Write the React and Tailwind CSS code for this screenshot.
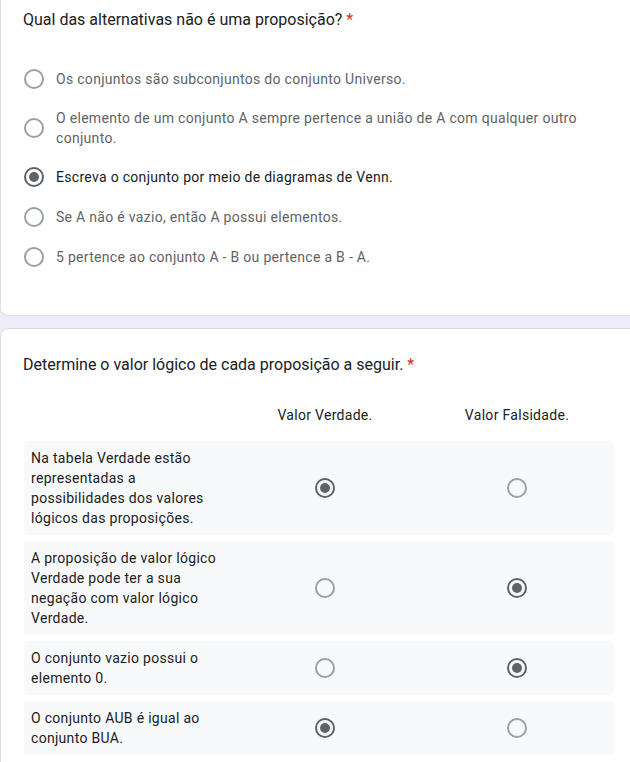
import React from "react";

const options = [
  { text: "Os conjuntos são subconjuntos do conjunto Universo.", checked: false },
  {
    text: "O elemento de um conjunto A sempre pertence a união de A com qualquer outro conjunto.",
    checked: false,
  },
  { text: "Escreva o conjunto por meio de diagramas de Venn.", checked: true },
  { text: "Se A não é vazio, então A possui elementos.", checked: false },
  { text: "5 pertence ao conjunto A - B ou pertence a B - A.", checked: false },
];

const rows = [
  {
    text: "Na tabela Verdade estão representadas a possibilidades dos valores lógicos das proposições.",
    value: "v",
  },
  {
    text: "A proposição de valor lógico Verdade pode ter a sua negação com valor lógico Verdade.",
    value: "f",
  },
  { text: "O conjunto vazio possui o elemento 0.", value: "f" },
  { text: "O conjunto AUB é igual ao conjunto BUA.", value: "v" },
];

const Radio = ({ checked }) => (
  <div
    className={`w-5 h-5 shrink-0 rounded-full border-2 flex items-center justify-center ${
      checked ? "border-[#5f6368]" : "border-[#9aa0a6]"
    }`}
  >
    {checked && <div className="w-[10px] h-[10px] rounded-full bg-[#5f6368]"></div>}
  </div>
);

const Required = () => <span className="text-[#d93025]"> *</span>;

export default function App() {
  return (
    <div
      className="w-[630px] h-[762px] overflow-hidden bg-[#f0ebf8]"
      style={{ fontFamily: "Roboto, 'Noto Sans', sans-serif" }}
    >
      {/* QUESTION 1 */}
      <div className="w-[660px] bg-white border-x border-b border-[#dadce0] rounded-b-lg pt-2 pb-[38px] pl-[22px]">
        <h2 className="text-base leading-6 text-[#202124]">
          Qual das alternativas não é uma proposição?
          <Required />
        </h2>

        <div className="mt-[27px] pl-[1px]">
          {options.map((o, i) => (
            <div key={i} className="flex items-center gap-3 min-h-[40px] py-[9px] w-[570px]">
              <Radio checked={o.checked} />
              <span
                className={`text-sm leading-5 tracking-[0.3px] ${
                  o.checked ? "text-[#202124]" : "text-[#5f6368]"
                }`}
              >
                {o.text}
              </span>
            </div>
          ))}
        </div>
      </div>

      {/* QUESTION 2 */}
      <div className="mt-3 w-[660px] bg-white border border-[#dadce0] rounded-t-lg pt-6 pb-6 pl-[22px]">
        <h2 className="text-base leading-6 text-[#202124]">
          Determine o valor lógico de cada proposição a seguir.
          <Required />
        </h2>

        <div className="flex mt-[28px] pl-[1px] text-sm leading-5 tracking-[0.3px] text-[#202124]">
          <div className="w-[201px]"></div>
          <div className="w-[200px] text-center">Valor Verdade.</div>
          <div className="w-[184px] text-center">Valor Falsidade.</div>
        </div>

        <div className="mt-[16px] pl-[1px] flex flex-col gap-[6px]">
          {rows.map((r, i) => (
            <div key={i} className="flex items-center w-[590px] bg-[#f8f9fa] rounded py-[7px]">
              <div className="w-[201px] pl-[7px] pr-[4px] text-sm leading-5 tracking-[0.3px] text-[#202124]">
                {r.text}
              </div>
              <div className="w-[200px] flex justify-center">
                <Radio checked={r.value === "v"} />
              </div>
              <div className="w-[184px] flex justify-center">
                <Radio checked={r.value === "f"} />
              </div>
            </div>
          ))}
        </div>
      </div>
    </div>
  );
}
